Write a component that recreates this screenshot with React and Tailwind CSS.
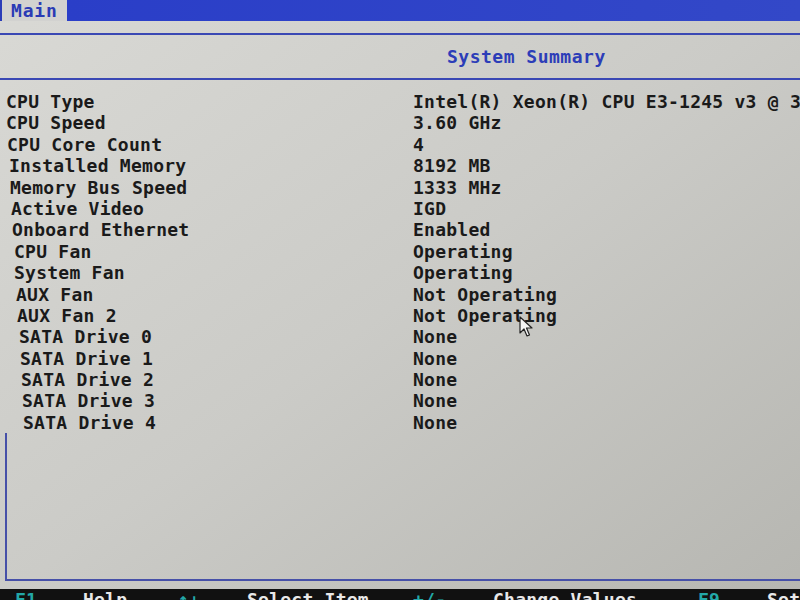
import React from "react";

const rows = [
  { label: "CPU Type", value: "Intel(R) Xeon(R) CPU E3-1245 v3 @ 3.40GHz", pl: "pl-[6px]" },
  { label: "CPU Speed", value: "3.60 GHz", pl: "pl-[6px]" },
  { label: "CPU Core Count", value: "4", pl: "pl-[7px]" },
  { label: "Installed Memory", value: "8192 MB", pl: "pl-[9px]" },
  { label: "Memory Bus Speed", value: "1333 MHz", pl: "pl-[10px]" },
  { label: "Active Video", value: "IGD", pl: "pl-[11px]" },
  { label: "Onboard Ethernet", value: "Enabled", pl: "pl-[12px]" },
  { label: "CPU Fan", value: "Operating", pl: "pl-[14px]" },
  { label: "System Fan", value: "Operating", pl: "pl-[14px]" },
  { label: "AUX Fan", value: "Not Operating", pl: "pl-[16px]" },
  { label: "AUX Fan 2", value: "Not Operating", pl: "pl-[17px]" },
  { label: "SATA Drive 0", value: "None", pl: "pl-[19px]" },
  { label: "SATA Drive 1", value: "None", pl: "pl-[20px]" },
  { label: "SATA Drive 2", value: "None", pl: "pl-[21px]" },
  { label: "SATA Drive 3", value: "None", pl: "pl-[22px]" },
  { label: "SATA Drive 4", value: "None", pl: "pl-[23px]" },
];

export default function App() {
  return (
    <div
      className="relative w-[800px] h-[600px] overflow-hidden flex flex-col bg-linear-to-br from-[#d9d9d5] via-[#cbcbc7] to-[#b6b6b1] text-[18px] font-bold text-[#1a1a1a] tracking-[0.25px]"
      style={{ fontFamily: '"DejaVu Sans Mono", "Liberation Mono", monospace' }}
    >
      {/* top menu bar */}
      <div className="flex h-[21px] shrink-0">
        <div className="w-[67px] bg-[#d2d2d0] border-l-2 border-[#2a3cb8] pl-[9px] leading-[21px] text-[#2a3bb5] tracking-[0.8px]">
          Main
        </div>
        <div className="flex-1 bg-linear-to-r from-[#2a3ec8] to-[#3348c8]" />
      </div>
      <div className="h-[12px] shrink-0" />
      <div className="h-[2px] shrink-0 bg-[#3a48b4]" />
      <div className="h-[43px] shrink-0 flex items-center pl-[447px] text-[#2c3db8] whitespace-nowrap tracking-[0.5px]">
        System Summary
      </div>
      <div className="h-[2px] shrink-0 bg-[#3a48b4]" />

      {/* rows */}
      <div className="pt-[11px] shrink-0 flex flex-col">
        {rows.map((r) => (
          <div key={r.label} className="flex h-[21.4px] leading-[21.4px] whitespace-nowrap">
            <div className={`w-[413px] shrink-0 ${r.pl}`}>{r.label}</div>
            <div>{r.value}</div>
          </div>
        ))}
      </div>

      {/* panel bottom */}
      <div className="flex-1 ml-[5px] border-l-2 border-b-2 border-[#4650a8]" />
      <div className="h-[8px] shrink-0" />

      {/* bottom help bar */}
      <div className="h-[11px] shrink-0 bg-[#111111] flex items-start leading-[21px] whitespace-nowrap">
        <span className="w-[15px] shrink-0" />
        <span className="w-[68px] shrink-0 text-[#23a8a8]">F1</span>
        <span className="w-[95px] shrink-0 text-[#e8e8e8]">Help</span>
        <span className="w-[69px] shrink-0 text-[#23a8a8]">↑↓</span>
        <span className="w-[166px] shrink-0 text-[#e8e8e8]">Select Item</span>
        <span className="w-[80px] shrink-0 text-[#23a8a8]">+/-</span>
        <span className="w-[205px] shrink-0 text-[#e8e8e8]">Change Values</span>
        <span className="w-[69px] shrink-0 text-[#23a8a8]">F9</span>
        <span className="shrink-0 text-[#e8e8e8]">Setup Defaults</span>
      </div>

      {/* mouse cursor */}
      <svg
        className="absolute left-[519px] top-[316px]"
        width="14"
        height="22"
        viewBox="0 0 14 22"
      >
        <path
          d="M1 1 L1 17 L5 13 L8 20 L10.5 19 L7.5 12 L13 12 Z"
          fill="#f4f4f4"
          stroke="#222"
          strokeWidth="1.2"
          strokeLinejoin="round"
        />
      </svg>
    </div>
  );
}
